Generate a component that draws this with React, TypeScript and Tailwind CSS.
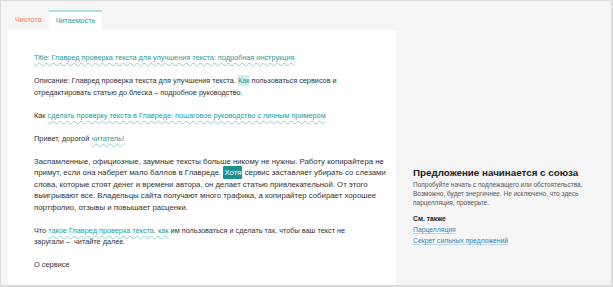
import React from "react";

const link =
  "text-[#2a9a9c] underline decoration-wavy decoration-[#8ad0d0] decoration-1 underline-offset-[2px]";

export default function App() {
  return (
    <div className="w-[613px] h-[287px] bg-[#f5f5f5] border-l border-t border-r-2 border-b-2 border-[#dcdcdc] flex flex-col font-['Liberation_Sans',Arial,sans-serif] overflow-hidden">
      <div className="flex pl-[7px] pt-[9px] h-[29px] text-[7.2px] shrink-0">
        <div className="px-[7px] flex items-center text-[#f07e5a]">Чистота</div>
        <div className="px-[7px] flex items-center bg-white border-t-2 border-[#aee0e0] text-[#2a9a9c]">
          Читаемость
        </div>
      </div>
      <div className="flex flex-1 min-h-0">
        <div className="w-[388px] ml-[7px] bg-white pl-[26px] pr-[2px] pt-[22px] text-[7.4px] leading-[11.5px] text-[#333] flex flex-col gap-[11.5px]">
          <p className="text-[7.3px]">
            <span className={link}>
              Title: Главред проверка текста для улучшения текста: подробная инструкция
            </span>
          </p>
          <p className="text-[7.3px]">
            Описание: Главред проверка текста для улучшения текста.{" "}
            <span className="bg-[#cdeeee] text-[#2a9a9c] rounded-[1px] py-[1px]">Как</span> пользоваться сервисов и
            <br />
            отредактировать статью до блеска – подробное руководство.
          </p>
          <p className="text-[7.3px]">
            Как{" "}
            <span className={link}>
              сделать проверку текста в Главреде: пошаговое руководство с личным примером
            </span>
          </p>
          <p>
            Привет, дорогой <span className={link}>читатель!</span>
          </p>
          <p className="text-[7.8px]">
            Заспамленные, официозные, заумные тексты больше никому не нужны. Работу копирайтера не
            <br />
            примут, если она наберет мало баллов в Главреде.{" "}
            <span className="bg-[#1b9191] text-white rounded-[1px] px-[1px] py-[2px]">Хотя</span> сервис заставляет убирать со слезами
            <br />
            слова, которые стоят денег и времени автора, он делает статью привлекательной. От этого
            <br />
            выигрывают все. Владельцы сайта получают много трафика, а копирайтер собирает хорошее
            <br />
            портфолио, отзывы и повышает расценки.
          </p>
          <p className="text-[7.3px]">
            Что <span className={link}>такое Главред проверка текста, как</span> им пользоваться и сделать так, чтобы ваш текст не
            <br />
            заругали –&nbsp; читайте далее.
          </p>
          <p>О сервисе</p>
        </div>
        <div className="flex-1 pl-[17px] pt-[136px] pr-[10px]">
          <div className="text-[9.8px] leading-[13px] font-bold text-[#222]">
            Предложение начинается с союза
          </div>
          <div className="text-[6.5px] leading-[9px] text-[#555] mt-[1px]">
            Попробуйте начать с подлежащего или обстоятельства.
            <br />
            Возможно, будет энергичнее. Не исключено, что здесь
            <br />
            парцелляция, проверьте.
          </div>
          <div className="text-[6.8px] leading-[9px] font-bold text-[#222] mt-[7px]">См. также</div>
          <div className="text-[6.8px] leading-[9px] mt-[2px] flex flex-col gap-[2px] items-start">
            <span className="text-[#3b82b6] underline decoration-[#bcd6ea] underline-offset-[1px]">Парцелляция</span>
            <span className="text-[#3b82b6] underline decoration-[#bcd6ea] underline-offset-[1px]">
              Секрет сильных предложений
            </span>
          </div>
        </div>
      </div>
    </div>
  );
}
